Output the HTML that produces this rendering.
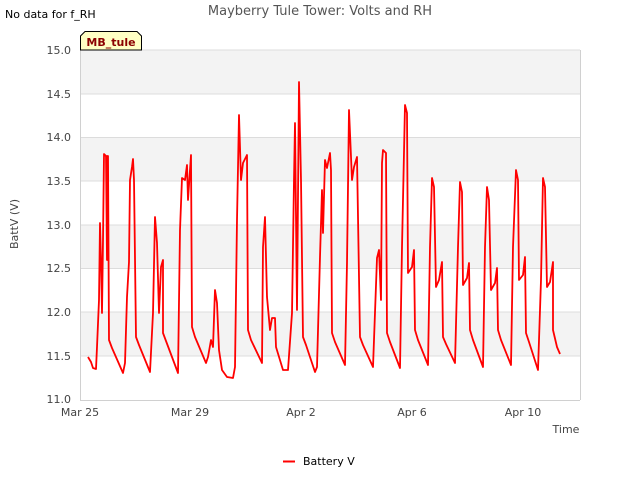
<!DOCTYPE html>
<html><head><meta charset="utf-8"><style>
body{margin:0;background:#fff;}
svg{display:block;font-family:"DejaVu Sans","Liberation Sans",sans-serif;}
</style></head><body>
<svg width="640" height="480" viewBox="0 0 640 480">
<rect x="0" y="0" width="640" height="480" fill="#fff"/>
<rect x="80" y="50" width="500" height="350" fill="#fff"/>
<g fill="#f3f3f3">
<rect x="80" y="50" width="500" height="44"/>
<rect x="80" y="137" width="500" height="44"/>
<rect x="80" y="225" width="500" height="44"/>
<rect x="80" y="312" width="500" height="44"/>
</g>
<g stroke="#dcdcdc" stroke-width="1">
<line x1="80" y1="50" x2="580" y2="50"/>
<line x1="80" y1="94" x2="580" y2="94"/>
<line x1="80" y1="137.5" x2="580" y2="137.5"/>
<line x1="80" y1="181" x2="580" y2="181"/>
<line x1="80" y1="225" x2="580" y2="225"/>
<line x1="80" y1="268.5" x2="580" y2="268.5"/>
<line x1="80" y1="312" x2="580" y2="312"/>
<line x1="80" y1="356" x2="580" y2="356"/>
</g>
<g stroke="#d0d0d0" stroke-width="1" fill="none">
<line x1="80.5" y1="50" x2="80.5" y2="400"/>
<line x1="80" y1="400.5" x2="580" y2="400.5"/>
<line x1="580.5" y1="50" x2="580.5" y2="400"/>
</g>
<g font-size="11" fill="#444" text-anchor="end">
<text x="71" y="54">15.0</text>
<text x="71" y="98">14.5</text>
<text x="71" y="141">14.0</text>
<text x="71" y="185">13.5</text>
<text x="71" y="229">13.0</text>
<text x="71" y="272">12.5</text>
<text x="71" y="316">12.0</text>
<text x="71" y="360">11.5</text>
<text x="71" y="403">11.0</text>
</g>
<g font-size="11" fill="#444" text-anchor="middle">
<text x="80" y="416">Mar 25</text>
<text x="190" y="416">Mar 29</text>
<text x="301" y="416">Apr 2</text>
<text x="412" y="416">Apr 6</text>
<text x="523" y="416">Apr 10</text>
</g>
<text x="566" y="433" font-size="11" fill="#444" text-anchor="middle">Time</text>
<text transform="translate(18,224) rotate(-90)" font-size="11" fill="#444" text-anchor="middle">BattV (V)</text>
<text x="320" y="15" font-size="13" fill="#555" text-anchor="middle">Mayberry Tule Tower: Volts and RH</text>
<text x="5" y="18" font-size="11" fill="#000">No data for f_RH</text>
<path d="M80.5,50 L80.5,36 L85,31.5 L137,31.5 L141.5,36 L141.5,50 Z" fill="#ffffc4" stroke="#000" stroke-width="1"/>
<text x="111" y="46" font-size="11" font-weight="bold" fill="#8b0000" text-anchor="middle">MB_tule</text>
<polyline fill="none" stroke="#ff0000" stroke-width="1.8" stroke-linejoin="round" points="
88,357 91,362 93,368 96,369 97,347 99,300 100,223 101,260 102,313 103,240 104,154 106,156 107,260 107,156 108,156 109,340 112,348 123,373
125,363 127,297 129,262 130,180 132,167 133,159 134,180 136,337 139,345 150,372
153,313 155,217 157,243 159,313 161,267 163,260 163,333 166,341 178,373
180,230 182,178 185,180 187,165 188,200 191,155 192,327 195,337 206,363 208,357 211,340 213,347 215,290 217,303 219,350 222,370 227,377 233,378 235,367
237,220 239,115 241,180 243,163 247,155 248,330 251,340 262,363
263,247 265,217 267,297 270,330 272,318 275,318 276,347 283,370 288,370 292,313
294,180 295,123 297,310 299,82 301,180 303,337 306,345 315,372 317,367
320,257 322,190 323,233 325,160 327,168 330,153 331,170 332,333 335,342 345,365
347,263 349,110 352,180 354,167 357,157 360,337 363,345 373,367
377,258 379,250 381,300 382,163 383,150 386,153 387,333 390,342 400,368
402,247 405,105 407,113 408,273 412,267 414,250 415,330 418,340 428,365
430,247 432,178 434,187 436,287 439,280 442,262 443,337 446,344 455,363
458,247 460,182 462,192 463,285 467,278 469,263 470,330 473,340 483,367
485,247 487,187 489,200 491,290 495,283 497,268 498,330 501,340 511,365
513,247 516,170 518,180 519,280 523,275 525,257 526,333 529,342 538,370
541,280 543,178 545,187 547,287 550,282 553,262 553,330 557,347 560,354"/>
<line x1="283" y1="461.5" x2="295" y2="461.5" stroke="#ff0000" stroke-width="2"/>
<text x="303" y="465" font-size="11" fill="#000">Battery V</text>
</svg>
</body></html>
